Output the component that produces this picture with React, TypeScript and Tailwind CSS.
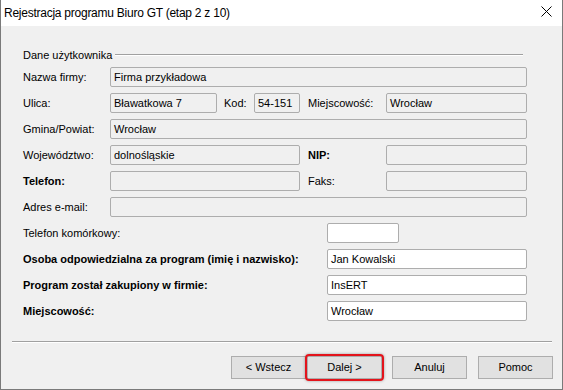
import type { ReactNode } from 'react';

type FieldProps = {
  width: string;
  value?: string;
  white?: boolean;
};

function Field({ width, value, white }: FieldProps) {
  return (
    <div
      className={`${width} h-[20px] shrink-0 rounded-[2px] border border-[#adadad] pl-[3px] flex items-center leading-none ${
        white ? 'bg-white border-[#a5a5a5]' : 'bg-[#f0f0f0]'
      }`}
    >
      {value}
    </div>
  );
}

function Label({ width, bold, children }: { width: string; bold?: boolean; children: ReactNode }) {
  return <div className={`${width} shrink-0 whitespace-nowrap ${bold ? 'font-bold' : ''}`}>{children}</div>;
}

function Button({ children }: { children: ReactNode }) {
  return (
    <button
      type="button"
      className="h-[23px] w-[75px] border border-[#adadad] bg-[#e1e1e1] text-[11px] text-black"
    >
      {children}
    </button>
  );
}

export default function App() {
  return (
    <div className="flex h-[390px] w-[563px] flex-col border-x border-b border-[#7a7a7a] bg-[#f0f0f0] text-[11px] text-black font-['Liberation_Sans',Arial,sans-serif]">
      {/* title bar */}
      <div className="flex h-[26px] shrink-0 items-center justify-between bg-white pl-[3px] pr-[10px]">
        <span className="text-[12px] tracking-[-0.25px]">Rejestracja programu Biuro GT (etap 2 z 10)</span>
        <svg width="11" height="11" viewBox="0 0 11 11" className="-mt-[3px]">
          <path d="M0.5 0.5 L10.5 10.5 M10.5 0.5 L0.5 10.5" stroke="#000" strokeWidth="1" />
        </svg>
      </div>

      <div className="flex flex-1 flex-col pl-[22px]">
        {/* group header */}
        <div className="mt-[22px] flex h-[14px] w-[500px] items-center gap-[3px]">
          <span>Dane użytkownika</span>
          <div className="flex-1 border-t border-b border-t-[#a0a0a0] border-b-white" />
        </div>

        <div className="mt-[5px] flex flex-col gap-[6px]">
          <div className="flex items-center">
            <Label width="w-[87px]">Nazwa firmy:</Label>
            <Field width="w-[417px]" value="Firma przykładowa" />
          </div>

          <div className="flex items-center">
            <Label width="w-[87px]">Ulica:</Label>
            <Field width="w-[107px]" value="Bławatkowa 7" />
            <Label width="w-[37px] pl-[7px]">Kod:</Label>
            <Field width="w-[46px]" value="54-151" />
            <Label width="w-[86px] pl-[8px]">Miejscowość:</Label>
            <Field width="w-[141px]" value="Wrocław" />
          </div>

          <div className="flex items-center">
            <Label width="w-[87px]">Gmina/Powiat:</Label>
            <Field width="w-[417px]" value="Wrocław" />
          </div>

          <div className="flex items-center">
            <Label width="w-[87px]">Województwo:</Label>
            <Field width="w-[190px]" value="dolnośląskie" />
            <Label width="w-[86px] pl-[8px]" bold>
              NIP:
            </Label>
            <Field width="w-[141px]" />
          </div>

          <div className="flex items-center">
            <Label width="w-[87px]" bold>
              Telefon:
            </Label>
            <Field width="w-[190px]" />
            <Label width="w-[86px] pl-[8px]">Faks:</Label>
            <Field width="w-[141px]" />
          </div>

          <div className="flex items-center">
            <Label width="w-[87px]">Adres e-mail:</Label>
            <Field width="w-[417px]" />
          </div>

          <div className="flex items-center">
            <Label width="w-[304px]">Telefon komórkowy:</Label>
            <Field width="w-[72px]" white />
          </div>

          <div className="flex items-center">
            <Label width="w-[304px]" bold>
              Osoba odpowiedzialna za program (imię i nazwisko):
            </Label>
            <Field width="w-[200px]" value="Jan Kowalski" white />
          </div>

          <div className="flex items-center">
            <Label width="w-[304px]" bold>
              Program został zakupiony w firmie:
            </Label>
            <Field width="w-[200px]" value="InsERT" white />
          </div>

          <div className="flex items-center">
            <Label width="w-[304px]" bold>
              Miejscowość:
            </Label>
            <Field width="w-[200px]" value="Wrocław" white />
          </div>
        </div>

        {/* separator */}
        <div className="-ml-[11px] mt-[20px] w-[540px] border-t border-b border-t-[#a0a0a0] border-b-white" />

        {/* buttons */}
        <div className="mt-[13px] flex pl-[208px]">
          <Button>&lt; Wstecz</Button>
          <div className="relative ml-[1px]">
            <Button>Dalej &gt;</Button>
            <div className="pointer-events-none absolute -inset-[2px] rounded-[4px] border-2 border-[#e3141c] shadow-[0_0_3px_rgba(0,0,0,0.35)]" />
          </div>
          <div className="ml-[10px]">
            <Button>Anuluj</Button>
          </div>
          <div className="ml-[11px]">
            <Button>Pomoc</Button>
          </div>
        </div>
      </div>
    </div>
  );
}
